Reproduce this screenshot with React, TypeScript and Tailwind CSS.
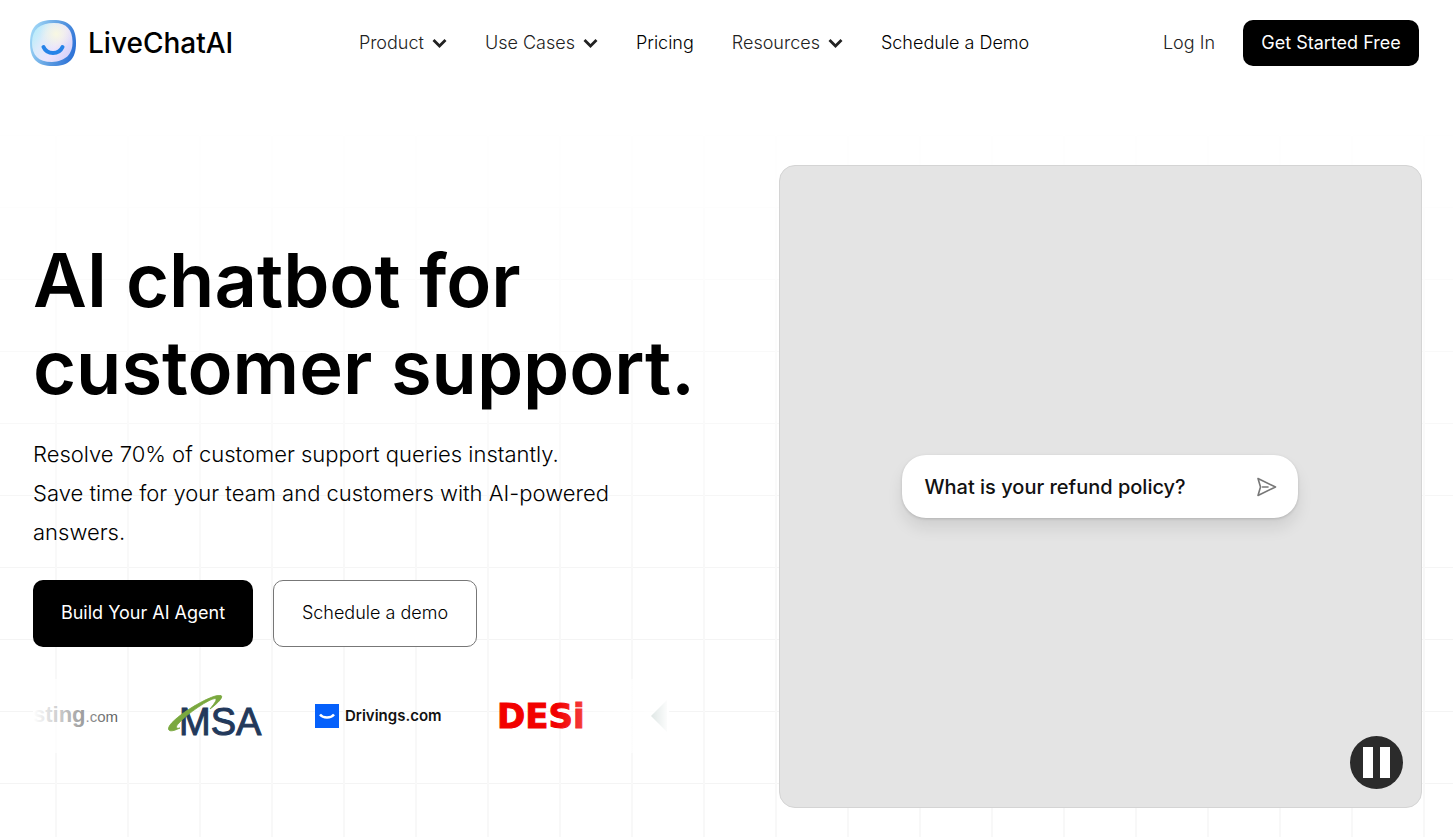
const navItems = [
  { name: 'Product', href: '#product', menu: true },
  { name: 'Use Cases', href: '#use-cases', menu: true },
  { name: 'Pricing', href: '#pricing', menu: false },
  { name: 'Resources', href: '#resources', menu: true },
  { name: 'Schedule a Demo', href: '#demo', menu: false },
];

function LogoMark() {
  return (
    <svg width="46" height="46" viewBox="0 0 46 46" aria-hidden="true">
      <defs>
        <linearGradient id="edge" x1="0" y1="0.4" x2="1" y2="0.7">
          <stop offset="0" stopColor="#9fd6f6" />
          <stop offset="0.5" stopColor="#5f9fe2" />
          <stop offset="1" stopColor="#2a6fd6" />
        </linearGradient>
        <linearGradient id="face" x1="0" y1="0.2" x2="1" y2="0.8">
          <stop offset="0" stopColor="#b4ecfa" />
          <stop offset="0.3" stopColor="#dcebfb" />
          <stop offset="0.6" stopColor="#ebe4fc" />
          <stop offset="1" stopColor="#d3d0fa" />
        </linearGradient>
        <radialGradient id="glow" cx="0.6" cy="0.28" r="0.4">
          <stop offset="0" stopColor="#f8f8e2" />
          <stop offset="1" stopColor="#f8f8e2" stopOpacity="0" />
        </radialGradient>
      </defs>
      <path d="M23 0C39 0 46 7 46 23S39 46 23 46 0 39 0 23 7 0 23 0Z" fill="url(#edge)" />
      <path d="M24 3C37 3 42 10 42.500 21C43 35 35 41 22 42C8 42 2 35 2 23C2 9 10 3 24 3Z" fill="url(#face)" />
      <path d="M24 3C37 3 42 10 42.500 21C43 35 35 41 22 42C8 42 2 35 2 23C2 9 10 3 24 3Z" fill="url(#glow)" />
      <path d="M13.500 27C17 35 29 35 32.500 27" fill="none" stroke="#2583e8" strokeWidth="4" strokeLinecap="round" />
    </svg>
  );
}

function Chevron() {
  return (
    <svg width="15" height="10" viewBox="0 0 15 10" aria-hidden="true">
      <path d="M1.500 2L7.500 8L13.500 2" fill="none" stroke="#222" strokeWidth="2.800" />
    </svg>
  );
}

function Header() {
  return (
    <header className="flex items-center justify-between pt-5 pr-[34px] pl-[30px]">
      <a href="#home" className="flex items-center gap-3">
        <LogoMark />
        <span className="text-[28px] leading-8 font-medium">LiveChatAI</span>
      </a>

      <nav className="mr-2 flex items-center gap-[38px] text-[18px] leading-6 font-light">
        {navItems.map((item) =>
          item.menu ? (
            <button key={item.name} type="button" className="flex items-center gap-2 text-[#222]">
              {item.name}
              <Chevron />
            </button>
          ) : (
            <a key={item.name} href={item.href}>
              {item.name}
            </a>
          )
        )}
      </nav>

      <div className="flex items-center gap-7 text-[18px] leading-6">
        <a href="#login" className="font-light text-[#222]">Log In</a>
        <a href="#signup" className="flex h-[46px] w-[176px] items-center justify-center rounded-[10px] bg-black text-white">
          Get Started Free
        </a>
      </div>
    </header>
  );
}

function CustomerLogos() {
  return (
    <div className="relative mt-8 flex h-[74px] max-w-[636px] items-center overflow-hidden">
      <div className="flex shrink-0 items-center">
        <div className="w-[134px] font-['Liberation_Sans',sans-serif] leading-8 text-[#444]">
          <span className="text-[22px] font-bold">sting</span>
          <span className="text-[15px]">.com</span>
        </div>

        <div className="relative flex h-[42px] w-[148px] items-end pl-3">
          <span className="font-['Liberation_Sans',sans-serif] text-[38px] leading-[30px] text-[#22395b] [-webkit-text-stroke:1px_#22395b]">
            MSA
          </span>
          <svg className="absolute top-0 left-0" width="58" height="42" viewBox="0 0 58 42" aria-hidden="true">
            <path
              d="M43 14C50 9 57 2 54 0.500C47-2 12 18 3 30C-1 36 3 38 13 33C9 34 8 32 12 28C21 18 42 4 48 3.500C51 4 47 9 43 14Z"
              fill="#7aa83f"
              stroke="#7aa83f"
              strokeWidth="0.800"
            />
          </svg>
        </div>

        <div className="flex w-[182px] items-center gap-1.5">
          <svg width="24" height="24" viewBox="0 0 24 24" aria-hidden="true">
            <path d="M0 0H24V24H0Z" fill="#0560fb" />
            <path d="M5 10.500C8 14.500 16 14.500 19 10.500" fill="none" stroke="#fff" strokeWidth="2.400" />
          </svg>
          <span className="text-[15px] leading-6 font-semibold text-[#111]">Drivings.com</span>
        </div>

        <span className="w-[154px] font-['DejaVu_Sans',sans-serif] text-[34px] leading-8 font-bold text-[#f20000] [-webkit-text-stroke:1px_#f20000]">
          DESi
        </span>

        <svg width="18" height="32" viewBox="0 0 18 32" aria-hidden="true">
          <path d="M0 16L16 0V32Z" fill="#3c6a62" />
        </svg>
      </div>

      {/* edge fades */}
      <div className="absolute inset-y-0 left-0 w-24 bg-linear-to-r from-white to-transparent" />
      <div className="absolute inset-y-0 right-0 w-28 bg-linear-to-l from-white to-transparent" />
    </div>
  );
}

function VideoCard() {
  return (
    <div className="relative flex aspect-square w-[46.3%] shrink-0 items-center justify-center rounded-2xl border border-[#d4d4d4] bg-[#e4e4e4]">
      <form className="flex h-[63px] w-[396px] items-center justify-between rounded-3xl bg-white pr-5 pl-[22px] shadow-[0_10px_16px_rgba(0,0,0,0.09),0_1px_3px_rgba(0,0,0,0.15)]">
        <input
          aria-label="Ask a question"
          defaultValue="What is your refund policy?"
          className="w-72 bg-transparent text-[20px] leading-6 font-medium text-[#111] outline-none"
        />
        <button type="button" aria-label="Send">
          <svg width="22" height="20" viewBox="0 0 22 20" fill="none" stroke="#777" strokeWidth="1.600" strokeLinejoin="round" strokeLinecap="round" aria-hidden="true">
            <path d="M2 1.500L19.500 10L2 18.500L4.500 10Z" />
            <path d="M6.500 10H12" />
          </svg>
        </button>
      </form>

      <button
        type="button"
        aria-label="Pause"
        className="absolute right-[18px] bottom-[18px] flex size-[53px] items-center justify-center gap-[7px] rounded-full bg-[#2b2b2b]"
      >
        <span className="h-[31px] w-2.5 bg-white" />
        <span className="h-[31px] w-2.5 bg-white" />
      </button>
    </div>
  );
}

function Hero() {
  return (
    <main className="flex items-center justify-between pt-[99px] pr-[31px] pb-[29px] pl-[33px]">
      <section className="min-w-0 flex-1 pt-4">
        <h1 className="text-[74px] leading-[87px] font-semibold whitespace-nowrap">
          AI chatbot for
          <br />
          customer support.
        </h1>
        <p className="mt-6 max-w-[620px] text-[22px] leading-[39px] font-light">
          Resolve 70% of customer support queries instantly.
          <br />
          Save time for your team and customers with AI-powered answers.
        </p>
        <div className="mt-7 flex gap-5 text-[18px] leading-6">
          <a href="#build" className="flex h-[67px] w-[220px] items-center justify-center rounded-[10px] bg-black text-white">
            Build Your AI Agent
          </a>
          <a href="#demo" className="flex h-[67px] w-[204px] items-center justify-center rounded-[10px] border border-[#777] bg-white font-light">
            Schedule a demo
          </a>
        </div>
        <CustomerLogos />
      </section>
      <VideoCard />
    </main>
  );
}

export default function App() {
  return (
    <div className="relative isolate min-h-screen overflow-hidden bg-white font-['Inter',sans-serif] text-black">
      {/* faint grid, fading out towards the top */}
      <div className="absolute inset-0 -z-10 bg-[linear-gradient(to_right,#f8f8f8_2px,transparent_2px),linear-gradient(to_bottom,#f4f4f4_1px,transparent_1px)] bg-size-[72px_72px] bg-position-[55px_63px] [mask-image:linear-gradient(to_bottom,transparent_100px,black_600px)]" />
      <Header />
      <Hero />
    </div>
  );
}
